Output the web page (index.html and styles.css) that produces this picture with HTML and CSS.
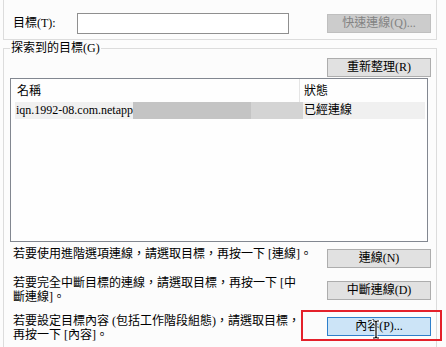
FILE: index.html
```html
<!DOCTYPE html>
<html lang="zh-Hant">
<head>
<meta charset="utf-8">
<title>探索到的目標</title>
<link rel="stylesheet" href="styles.css">
</head>
<body>
<div class="dialog">
  <div class="target-box">
    <label class="field-label">目標(T):</label>
    <div class="textbox"></div>
    <button class="btn btn-disabled btn-quick">快速連線(Q)...</button>
  </div>
  <div class="group">
    <div class="group-title">探索到的目標(G)</div>
    <div class="refresh-row"><button class="btn">重新整理(R)</button></div>
    <div class="listview">
      <div class="lv-header">
        <div class="lv-col1">名稱</div>
        <div class="lv-col2">狀態</div>
      </div>
      <div class="lv-row">
        <div class="lv-cell1"><span class="lv-text">iqn.1992-08.com.netapp</span><span class="redact-dark"></span><span class="redact-light"></span></div>
        <div class="lv-cell2">已經連線</div>
      </div>
    </div>
    <div class="action action-1">
      <p class="action-text">若要使用進階選項連線，請選取目標，再按一下 [連線]。</p>
      <button class="btn btn-a1">連線(N)</button>
    </div>
    <div class="action action-2">
      <p class="action-text">若要完全中斷目標的連線，請選取目標，再按一下 [中<br>斷連線]。</p>
      <button class="btn btn-a2">中斷連線(D)</button>
    </div>
    <div class="action action-3">
      <p class="action-text">若要設定目標內容 (包括工作階段組態)，請選取目標，<br>再按一下 [內容]。</p>
      <button class="btn btn-focus btn-a3">內容(P)...</button>
    </div>
  </div>
</div>
<div class="annotation"></div>
<svg class="cursor" width="10" height="19" viewBox="0 0 10 19">
  <path d="M2 1 H3.5 Q5 1 5 2.5 V16.5 Q5 18 3.5 18 H2 M8 1 H6.5 Q5 1 5 2.5 M5 16.5 Q5 18 6.5 18 H8" fill="none" stroke="#fff" stroke-width="3" stroke-linecap="round"/>
  <path d="M2 1 H3.5 Q5 1 5 2.5 V16.5 Q5 18 3.5 18 H2 M8 1 H6.5 Q5 1 5 2.5 M5 16.5 Q5 18 6.5 18 H8" fill="none" stroke="#000" stroke-width="1.2"/>
</svg>
</body>
</html>
```
FILE: styles.css
```css
html, body {
  margin: 0;
  padding: 0;
  overflow: hidden;
  background: #fcfcfc;
}
body {
  width: 446px;
  height: 347px;
  position: relative;
  font-family: "Liberation Serif", "Noto Sans CJK TC", serif;
  font-size: 12px;
  color: #000;
}
.target-box {
  margin-left: 3px;
  width: 434px;
  height: 40px;
  box-sizing: border-box;
  border: 1px solid #dcdcdc;
  border-top: none;
  display: flex;
  align-items: flex-start;
  padding: 13px 0 0 9px;
}
.field-label {
  width: 64px;
  line-height: 21px;
}
.textbox {
  width: 212px;
  height: 21px;
  box-sizing: border-box;
  border: 1px solid #8f8f8f;
  background: #fff;
}
.btn {
  font: inherit;
  width: 104px;
  height: 19px;
  padding: 0;
  box-sizing: border-box;
  border: 1px solid #adadad;
  background: #e1e1e1;
  color: #000;
  line-height: 17px;
  text-align: center;
}
.btn-quick {
  margin: 1px 0 0 38px;
}
.btn-disabled {
  background: #cccccc;
  border-color: #bfbfbf;
  color: #838383;
}
.btn-focus {
  background: #cce4f7;
  border-color: #2e7fcb;
}
.group {
  margin: 8px 0 0 3px;
  width: 434px;
  height: 299px;
  box-sizing: border-box;
  border: 1px solid #dcdcdc;
  border-bottom: none;
}
.group-title {
  margin: -9px 0 0 6px;
  padding: 0 1px;
  line-height: 16px;
  background: #fcfcfc;
  width: max-content;
}
.refresh-row {
  display: flex;
  justify-content: flex-end;
  padding-right: 5px;
  margin-top: 2px;
}
.listview {
  margin: 1px 0 0 6px;
  width: 418px;
  height: 164px;
  box-sizing: border-box;
  border: 1px solid #828790;
  background: #fefefe;
}
.lv-header {
  display: flex;
  height: 23px;
}
.lv-col1 {
  width: 289px;
  box-sizing: border-box;
  padding: 2px 0 0 6px;
  line-height: 21px;
  border-right: 1px solid #e5e5e5;
}
.lv-col2 {
  padding: 2px 0 0 4px;
  line-height: 21px;
}
.lv-row {
  display: flex;
  margin-left: 4px;
  width: 410px;
  height: 17px;
  line-height: 17px;
}
.lv-cell1 {
  width: 288px;
  display: flex;
}
.lv-text {
  padding-left: 1px;
  background: #f0f0f0;
}
.redact-dark {
  flex: 1;
  background: #c4c4c4;
}
.redact-light {
  width: 52px;
  background: #d4d4d4;
}
.lv-cell2 {
  flex: 1;
  padding-left: 1px;
  background: #f0f0f0;
}
.action {
  display: flex;
  align-items: flex-start;
  padding-left: 9px;
}
.action-text {
  margin: 0;
  width: 314px;
  line-height: 14px;
  white-space: nowrap;
}
.action-1 { margin-top: 5px; }
.action-2 { margin-top: 8px; }
.action-3 { margin-top: 10px; }
.btn-a1 { margin-top: 2px; }
.btn-a2 { margin-top: 5px; }
.btn-a3 { margin-top: 3px; }
.annotation {
  position: absolute;
  left: 301px;
  top: 310px;
  width: 141px;
  height: 31px;
  box-sizing: border-box;
  border: 2px solid #e4212b;
}
.cursor {
  position: absolute;
  left: 371px;
  top: 320px;
}
```
